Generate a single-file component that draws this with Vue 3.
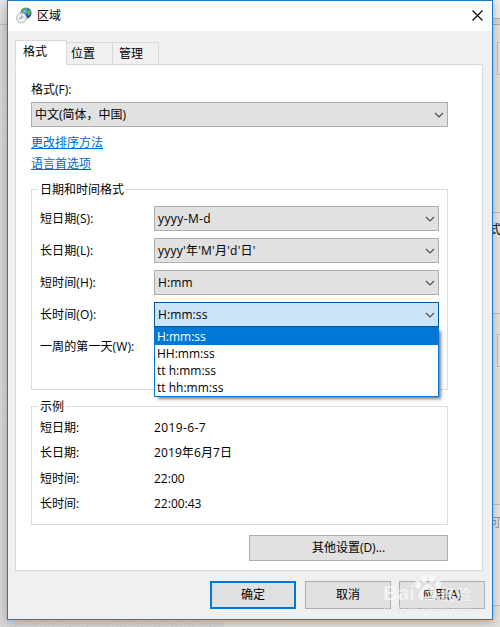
<script setup>
  import { ref } from 'vue'

  const tabs = ['格式', '位置', '管理']
  const activeTab = ref('格式')

  const formats = [
    { label: '短日期(S):', value: 'yyyy-M-d', cls: 'ymd' },
    { label: '长日期(L):', value: "yyyy'年'M'月'd'日'", cls: 'long' },
    { label: '短时间(H):', value: 'H:mm', cls: 'time' },
    { label: '长时间(O):', value: 'H:mm:ss', cls: 'time', options: ['H:mm:ss', 'HH:mm:ss', 'tt h:mm:ss', 'tt hh:mm:ss'] },
    { label: '一周的第一天(W):' }
  ]

  const samples = [
    { label: '短日期:', value: '2019-6-7', cls: 'ymd' },
    { label: '长日期:', value: '2019年6月7日', cls: 'time' },
    { label: '短时间:', value: '22:00' },
    { label: '长时间:', value: '22:00:43' }
  ]
</script>

<template>
  <div class="desktop">
    <div class="behind-left"></div>
    <div class="behind-right">
      <div class="strip"></div>
      <div class="box box--top"></div>
      <div class="card"><span>式</span></div>
      <div class="box box--mid"></div>
      <div class="card card--low"><span>可</span></div>
    </div>
    <div class="behind-bottom"></div>

    <div class="window">
      <header class="titlebar">
        <svg class="globe" width="17" height="17" viewBox="0 0 17 17">
          <defs>
            <radialGradient id="sea" cx="35%" cy="30%" r="75%">
              <stop offset="0" stop-color="#9bd3f5" />
              <stop offset=".5" stop-color="#2c70cf" />
              <stop offset="1" stop-color="#173a94" />
            </radialGradient>
          </defs>
          <circle cx="9.9" cy="6" r="5.6" fill="url(#sea)" />
          <path d="M5 3Q8 0 10 1L9.500 3 7.500 4 7 6 5 6ZM12 3L14 3 15 6 13 9 11 6Z" fill="#55b548" />
          <circle cx="5.500" cy="11" r="4.900" fill="#eceff0" stroke="#b3b8bc" stroke-width="1" />
          <path d="M5.500 8V11.200H3M5.500 11.200L7.500 9.500" fill="none" stroke="#87919a" stroke-width=".8" />
        </svg>
        <span class="title">区域</span>
        <svg class="close" width="11" height="11" viewBox="0 0 11 11">
          <path d="M.5 .5L10.5 10.5M10.5 .5L.5 10.5" stroke="#000" stroke-width="1.1" />
        </svg>
      </header>

      <nav class="tabs">
        <div
          v-for="tab in tabs" :key="tab"
          class="tab"
          :class="{ 'tab--active': tab === activeTab }"
          @click="activeTab = tab"
          >{{ tab }}</div>
      </nav>

      <main class="panel">
        <div class="caption">格式(F):</div>
        <div class="select">
          <span>中文(简体，中国)</span>
          <svg class="arrow" width="10" height="6" viewBox="0 0 10 6"><path d="M1 1L5 5 9 1" /></svg>
        </div>
        <a class="link">更改排序方法</a>
        <a class="link">语言首选项</a>

        <section class="group group--formats">
          <h2 class="legend">日期和时间格式</h2>
          <div v-for="f in formats" :key="f.label" class="row">
            <span class="label">{{ f.label }}</span>
            <div v-if="f.value" class="select" :class="{ 'select--open': f.options }">
              <span :class="f.cls">{{ f.value }}</span>
              <svg class="arrow" width="10" height="6" viewBox="0 0 10 6"><path d="M1 1L5 5 9 1" /></svg>
              <ul v-if="f.options" class="options">
                <li v-for="(o, i) in f.options" :key="o" :class="{ selected: i === 0 }">{{ o }}</li>
              </ul>
            </div>
          </div>
        </section>

        <section class="group group--samples">
          <h2 class="legend">示例</h2>
          <div v-for="s in samples" :key="s.label" class="sample">
            <span class="label">{{ s.label }}</span>
            <span :class="s.cls">{{ s.value }}</span>
          </div>
        </section>

        <button class="btn btn--more">其他设置(D)...</button>
      </main>

      <footer class="actions">
        <button class="btn btn--default">确定</button>
        <button class="btn">取消</button>
        <button class="btn btn--apply">应用(A)</button>
      </footer>
    </div>

    <div class="watermark">
      <svg width="92" height="42" viewBox="0 0 92 42">
        <g class="paw">
          <ellipse cx="36" cy="11.5" rx="3.2" ry="4.5" />
          <ellipse cx="42" cy="5.5" rx="3.2" ry="4.5" />
          <ellipse cx="50" cy="5.5" rx="3.2" ry="4.5" />
          <ellipse cx="56" cy="11.5" rx="3.2" ry="4.5" />
          <path fill-rule="evenodd" d="M46 11Q50 11 52 16Q57 20 56 24Q54 29 46 27Q38 29 36 24Q35 20 40 16Q42 11 46 11ZM45 17Q41 17 41 21Q41 24 45 24Q49 24 49 21Q49 17 45 17Z" />
        </g>
        <text x="1" y="27" class="brand" textLength="32" lengthAdjust="spacingAndGlyphs">Bai</text>
        <text x="58" y="27" class="brand-cn" textLength="31">经验</text>
        <text x="1" y="38" class="site" textLength="89">jingyan.baidu.com</text>
      </svg>
    </div>
  </div>
</template>

<style>
  body {
    margin: 0;
    overflow: hidden;
  }
</style>

<style scoped>
  .desktop {
    position: relative;
    width: 500px;
    height: 627px;
    overflow: hidden;
    background: #d8d7d3;
    font: 12px/16px "Open Sans", "Noto Sans CJK SC", sans-serif;
    color: #000;
  }

  .desktop * {
    box-sizing: border-box;
  }

  .behind-left {
    position: absolute;
    left: 0;
    top: 0;
    width: 224px;
    height: 627px;
    background:
      linear-gradient(#e7e7e7, #dcdcdc) 0 0 / 100% 24px no-repeat,
      linear-gradient(#b8b8b8, #b8b8b8) 0 24px / 100% 1px no-repeat,
      repeating-linear-gradient(135deg, #d3d3d3 0 1px, #dadada 1px 3px);
  }

  .behind-right {
    position: absolute;
    left: 493px;
    top: 0;
    width: 7px;
    height: 627px;
    background: #e6e4dc;
    overflow: hidden;
  }

  .strip {
    height: 25px;
    background: linear-gradient(#f0f0f0 0 18px, #b5b5b7 18px 19px, #d9d9dc 19px 24px, #b0b0b3 24px);
  }

  .box {
    position: absolute;
    left: 4px;
    width: 20px;
    height: 33px;
    border: 1px solid #c0c0c0;
    background: #e6e6e6;
  }

  .box--top {
    top: 42px;
  }

  .box--mid {
    top: 334px;
  }

  .card {
    position: absolute;
    top: 212px;
    left: 0;
    width: 20px;
    height: 102px;
    padding-top: 9px;
    border: solid #c0c0c0;
    border-width: 1px 0;
    background: #e8e8e8;
  }

  .card span {
    margin-left: -4px;
  }

  .card--low {
    top: 504px;
    padding-top: 10px;
    color: #999;
  }

  .behind-bottom {
    position: absolute;
    left: 224px;
    bottom: 0;
    width: 276px;
    height: 7px;
    background: linear-gradient(#dddcd6, #e4e3dd);
  }

  .window {
    position: absolute;
    left: 7px;
    top: 0;
    width: 486px;
    height: 620px;
    display: flex;
    flex-direction: column;
    border: 1px solid #1979ca;
    background: #f0f0f0;
    box-shadow: 0 2px 10px rgba(0, 0, 0, .28);
  }

  .titlebar {
    display: flex;
    align-items: center;
    height: 30px;
    padding: 0 9px 2px 8px;
    background: #fff;
  }

  .title {
    margin: 2px auto 0 4px;
  }

  .close {
    margin-top: 1px;
  }

  .tabs {
    display: flex;
    align-items: flex-end;
    height: 34px;
    padding-left: 7px;
    position: relative;
    z-index: 1;
    margin-bottom: -1px;
  }

  .tab {
    width: 46px;
    height: 23px;
    padding: 3px 0 0 4px;
    border: 1px solid #d9d9d9;
    border-left: 0;
    background: #f0f0f0;
  }

  .tab:last-child {
    padding-left: 6px;
  }

  .tab--active {
    width: 52px;
    height: 25px;
    padding: 3px 0 0 7px;
    border-left: 1px solid #d9d9d9;
    border-bottom-color: #fff;
    background: #fff;
  }

  .panel {
    display: flex;
    flex-direction: column;
    align-items: flex-start;
    width: 468px;
    height: 507px;
    margin-left: 7px;
    padding: 17px 0 0 15px;
    border: 1px solid #d9d9d9;
    background: #fff;
  }

  .caption {
    height: 20px;
  }

  .select {
    position: relative;
    display: flex;
    align-items: center;
    width: 417px;
    height: 25px;
    flex: none;
    padding: 0 3px;
    border: 1px solid #adadad;
    background: #e1e1e1;
    white-space: nowrap;
  }

  .select--open {
    border-color: #00559b;
    background: #cce4f7;
  }

  .arrow {
    margin-left: auto;
  }

  .arrow path {
    fill: none;
    stroke: #505050;
    stroke-width: 1.2;
  }

  .link {
    height: 16px;
    margin-top: 8px;
    color: #0066cc;
    text-decoration: underline;
    cursor: pointer;
  }

  .link + .link {
    margin-top: 5px;
  }

  .group {
    width: 417px;
    flex: none;
    padding-left: 8px;
    border: 1px solid #dcdcdc;
  }

  .group--formats {
    height: 201px;
    margin-top: 17px;
  }

  .group--samples {
    height: 119px;
    margin-top: 16px;
  }

  .legend {
    width: max-content;
    height: 16px;
    margin: -8px 0 0 -2px;
    padding: 0 2px;
    background: #fff;
    font: inherit;
  }

  .row {
    display: flex;
    align-items: center;
    height: 25px;
    margin-bottom: 7px;
  }

  .legend + .row {
    margin-top: 8px;
  }

  .row .select {
    width: 285px;
  }

  .label {
    width: 114px;
    flex: none;
  }

  .row .label {
    letter-spacing: .1px;
  }

  .ymd {
    letter-spacing: .4px;
  }

  .long {
    letter-spacing: .25px;
  }

  .time {
    letter-spacing: .1px;
  }

  .options {
    position: absolute;
    z-index: 2;
    left: -1px;
    top: 24px;
    width: 285px;
    margin: 0;
    padding: 1px 0 0;
    border: 1px solid #0078d7;
    border-top: 0;
    background: linear-gradient(#0078d7 0 1px, #fff 1px);
    box-shadow: 3px 3px 3px -1px rgba(0, 0, 0, .5);
    list-style: none;
    line-height: 17px;
  }

  .options li {
    height: 17px;
    padding-left: 2px;
  }

  .options .selected {
    background: #0078d7;
    color: #fff;
  }

  .sample {
    display: flex;
    height: 16px;
    margin-bottom: 9.3px;
  }

  .legend + .sample {
    margin-top: 5px;
  }

  .btn {
    width: 86px;
    height: 28px;
    padding: 0;
    border: 1px solid #adadad;
    background: #e1e1e1;
    font: inherit;
    color: inherit;
  }

  .btn--more {
    width: 199px;
    height: 26px;
    margin: 10px 0 0 218px;
  }

  .btn--default {
    border: 2px solid #0078d7;
  }

  .btn--apply {
    margin-left: -1px;
  }

  .actions {
    display: flex;
    justify-content: flex-end;
    gap: 9px;
    padding: 10px 7px 0 0;
  }

  .watermark {
    position: absolute;
    left: 382px;
    top: 573px;
    pointer-events: none;
  }

  .watermark svg {
    display: block;
    fill: rgba(255, 255, 255, .68);
    stroke: rgba(170, 170, 170, .2);
    stroke-width: .5;
  }

  .brand {
    font: bold 21px "Liberation Sans", sans-serif;
  }

  .brand-cn {
    font: bold 15px "Noto Sans CJK SC", sans-serif;
  }

  .site {
    font: 10.5px "Liberation Serif", serif;
  }
</style>
